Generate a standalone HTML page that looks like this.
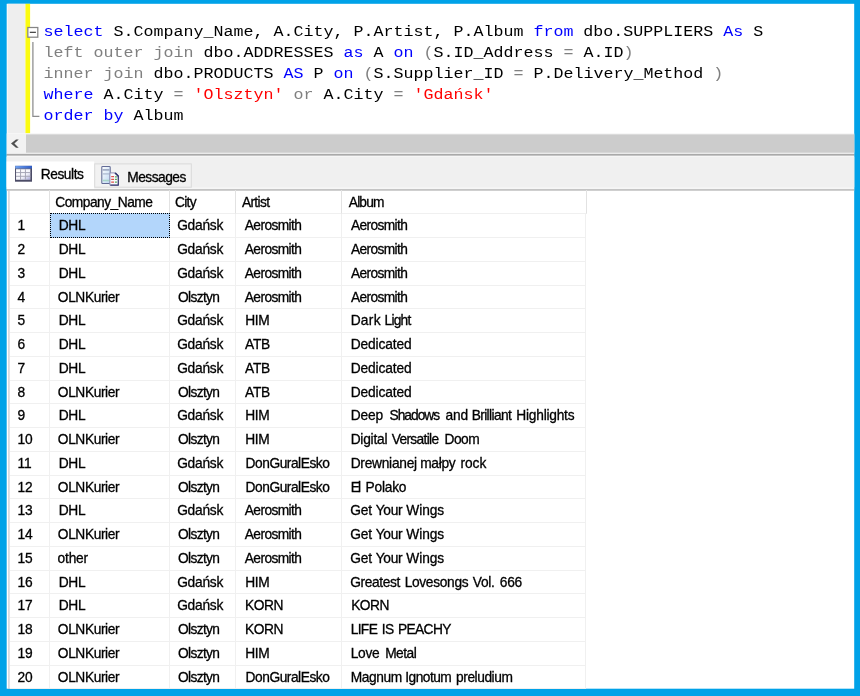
<!DOCTYPE html>
<html lang="pl">
<head>
<meta charset="utf-8">
<title>SQL query results</title>
<style>
html,body{margin:0;padding:0}
body{width:860px;height:696px;background:#00a2e8;position:relative;overflow:hidden;font-family:"Liberation Sans",sans-serif}
.abs{position:absolute}
.code{position:absolute;left:43.6px;top:0;font-family:"Liberation Mono",monospace;font-size:16.667px;line-height:21.1px;color:#000;white-space:pre}
.code div{position:absolute;left:0;height:21.1px;transform:scaleY(.86);transform-origin:0 15px}
.k{color:#0000ff}.g{color:#808080}.s{color:#ff0000}
.tabtxt{position:absolute;font-size:13.75px;line-height:16px;color:#000;white-space:nowrap}
.tabtxt i{font-style:normal}
/* grid */
.grid{position:absolute;left:0;top:0;width:860px;height:689px;overflow:hidden;font-size:13.75px;color:#000}
.hdr{--t:0px;position:absolute;left:0;top:190px;width:588px;height:24.25px}
.row{position:absolute;left:0;width:586px;height:23.75px}
.c{position:absolute;top:0;height:100%;box-sizing:border-box;border-right:1px solid #f0f0f0;border-bottom:1px solid #f0f0f0;line-height:24px;white-space:nowrap;overflow:hidden}
.c i{position:absolute;top:var(--t);font-style:normal}
.hdr i{top:1px}
.hdr .c{border-right-color:#e2e2e2;border-bottom-color:#f0f0f0}
.hdr .e{width:245.5px}
.n{left:10px;width:39.5px}
.n i{left:7.6px;letter-spacing:-.15px}
.a{left:49.5px;width:120px}
.b{left:169.5px;width:66px}
.d{left:235.5px;width:106px}
.e{left:341.5px;width:244.5px}
.sel{background:#b3d6fb;outline:1px dotted #000;outline-offset:-1px;top:-1px;height:24.75px;border:0}
.sel i{top:calc(var(--t) + 1px)}
.grid,.tabtxt{filter:blur(.35px);-webkit-text-stroke:.3px #000}
.code{filter:blur(.35px)}
</style>
</head>
<body>
<svg class="abs" style="left:0;top:0" width="860" height="696" viewBox="0 0 860 696">
<rect x="6.7" y="3.8" width="847.5" height="684.9" fill="#fff"/>
<rect x="7.6" y="3.8" width="17.8" height="129.4" fill="#eeeeee"/>
<rect x="25.45" y="3.8" width="4.65" height="129.5" fill="#fbfb10"/>
<rect x="27.85" y="27.5" width="9.95" height="9.7" fill="#fff" stroke="#858585" stroke-width="1.25"/>
<path d="M29.8 32.35H35.9" stroke="#4a4a4a" stroke-width="1.3"/>
<path d="M32.9 41.9V116.3H39.4" stroke="#8c8c8c" stroke-width="1.25" fill="none"/>
<rect x="6.7" y="133.4" width="847.5" height="20.6" fill="#f2f2f2"/>
<rect x="26" y="134.4" width="828.2" height="18.3" fill="#cccccc"/>
<path d="M11 143.6L16 139.4H18.7L14.4 143.6L18.7 147.8H16Z" fill="#505050"/>
<rect x="6.7" y="153.9" width="847.5" height="1.9" fill="#a9a9a9"/>
<rect x="6.7" y="155.8" width="847.5" height="33.2" fill="#f6f6f6"/>
<rect x="6.7" y="157" width="847.5" height="30.2" fill="#f0f0f0"/>
<rect x="6.7" y="161.5" width="87.5" height="27.5" fill="#fff"/>
<rect x="94.7" y="163.9" width="96.6" height="23.3" fill="#f2f2f2" stroke="#dadada" stroke-width="1"/>
<rect x="6.7" y="189" width="847.5" height="1.8" fill="#c4c4c4"/>
<rect x="8.35" y="190.8" width="1.15" height="498" fill="#c6c6cc"/>
</svg>
<div class="code">
<div style="top:20.5px"><span class="k">select</span> S.Company_Name, A.City, P.Artist, P.Album <span class="k">from</span> dbo.SUPPLIERS <span class="k">As</span> S</div>
<div style="top:41.55px"><span class="g">left outer join</span> dbo.ADDRESSES <span class="k">as</span> A <span class="k">on</span> <span class="g">(</span>S.ID_Address <span class="g">=</span> A.ID<span class="g">)</span></div>
<div style="top:62.6px"><span class="g">inner join</span> dbo.PRODUCTS <span class="k">AS</span> P <span class="k">on</span> <span class="g">(</span>S.Supplier_ID <span class="g">=</span> P.Delivery_Method <span class="g">)</span></div>
<div style="top:83.65px"><span class="k">where</span> A.City <span class="g">=</span> <span class="s">'Olsztyn'</span> <span class="g">or</span> A.City <span class="g">=</span> <span class="s">'Gdańsk'</span></div>
<div style="top:104.7px"><span class="k">order by</span> Album</div>
</div>
<!-- Results icon -->
<svg class="abs" style="left:14px;top:164px" width="20" height="20" viewBox="0 0 20 20">
<defs>
<linearGradient id="tb" x1="0" y1="0" x2="1" y2="0"><stop offset="0" stop-color="#6fa0ee"/><stop offset="1" stop-color="#2f5cc4"/></linearGradient>
<linearGradient id="cl" x1="0" y1="0" x2="1" y2="1"><stop offset="0" stop-color="#ffffff"/><stop offset=".6" stop-color="#f4f4fb"/><stop offset="1" stop-color="#a9a9d8"/></linearGradient>
</defs>
<rect x="1" y="1.9" width="17" height="15.8" fill="#4b4b66"/>
<rect x="1.9" y="4.6" width="14.6" height="11.2" fill="#a3a3b4"/>
<rect x="1.2" y="1.8" width="16.8" height="2.7" fill="url(#tb)"/>
<g fill="url(#cl)">
<rect x="2.1" y="5.4" width="14" height="10.2"/>
</g>
<g stroke="#a3a3b4" stroke-width="0.95" fill="none">
<path d="M6.55 5.2V15.8M11.45 5.2V15.8M2 8.55H16.3M2 12.3H16.3"/>
</g>
</svg>
<!-- Messages icon -->
<svg class="abs" style="left:100px;top:164px" width="21" height="23" viewBox="0 0 21 23">
<defs>
<linearGradient id="dg" x1="0" y1="0" x2="1" y2="1"><stop offset="0" stop-color="#ffffff"/><stop offset="1" stop-color="#bcd6f2"/></linearGradient>
</defs>
<rect x="1.8" y="2.5" width="8.4" height="17" rx="0.8" fill="url(#dg)" stroke="#626b96" stroke-width="1.05"/>
<path d="M2.6 5.9H9.5" stroke="#8f9bb8" stroke-width="1.4"/>
<path d="M2.6 9.9H9.5" stroke="#a9b6cf" stroke-width="1.2"/>
<path d="M2.6 16.5H9.5" stroke="#a8d6c8" stroke-width="1.6"/>
<path d="M9.9 8.9H15.6L18.3 11.6V21.2H9.9Z" fill="#fbfbfd" stroke="#8f90b4" stroke-width="1" stroke-linejoin="round"/>
<path d="M15.4 8.9L18.3 11.8V21.2H10.4" fill="none" stroke="#3b3d76" stroke-width="1.2" stroke-linejoin="round"/>
<path d="M15.2 8.6L18.6 12V13.4L14.5 9.4Z" fill="#34366e"/>
<path d="M11.2 12.6H14M11.2 15.4H14M11.2 18.2H14" stroke="#e0524e" stroke-width="1.3"/>
<path d="M14.9 12.9H16.9M14.9 15.4H16.9M14.9 18.2H16.9" stroke="#58a85a" stroke-width="1.3"/>
</svg>
<div class="tabtxt" style="left:40.7px;top:167px"><i style="letter-spacing:-.43px">Results</i></div>
<div class="tabtxt" style="left:127.2px;top:169.5px"><i style="letter-spacing:-.5px">Messages</i></div>
<div class="grid">
<div class="hdr"><span class="c n"></span><span class="c a"><i style="left:5.8px;letter-spacing:-0.51px">Company_Name</i></span><span class="c b"><i style="left:5.55px;letter-spacing:-0.72px">City</i></span><span class="c d"><i style="left:6.4px;letter-spacing:-0.65px">Artist</i></span><span class="c e"><i style="left:7.3px;letter-spacing:-0.83px">Album</i></span></div>

<div class="row" style="top:214.25px;--t:-0.25px"><span class="c n"><i>1</i></span><span class="c a sel"><i style="left:9.2px;letter-spacing:-0.3px">DHL</i></span><span class="c b"><i style="left:7.65px;letter-spacing:-0.24px">Gdańsk</i></span><span class="c d"><i style="left:9.3px;letter-spacing:-0.6px">Aerosmith</i></span><span class="c e"><i style="left:9.4px;letter-spacing:-0.61px">Aerosmith</i></span></div>
<div class="row" style="top:238px;--t:0px"><span class="c n"><i>2</i></span><span class="c a"><i style="left:9.2px;letter-spacing:-0.3px">DHL</i></span><span class="c b"><i style="left:7.65px;letter-spacing:-0.24px">Gdańsk</i></span><span class="c d"><i style="left:9.3px;letter-spacing:-0.6px">Aerosmith</i></span><span class="c e"><i style="left:9.4px;letter-spacing:-0.61px">Aerosmith</i></span></div>
<div class="row" style="top:261.75px;--t:0.25px"><span class="c n"><i>3</i></span><span class="c a"><i style="left:9.2px;letter-spacing:-0.3px">DHL</i></span><span class="c b"><i style="left:7.65px;letter-spacing:-0.24px">Gdańsk</i></span><span class="c d"><i style="left:9.3px;letter-spacing:-0.6px">Aerosmith</i></span><span class="c e"><i style="left:9.4px;letter-spacing:-0.61px">Aerosmith</i></span></div>
<div class="row" style="top:285.5px;--t:0.5px"><span class="c n"><i>4</i></span><span class="c a"><i style="left:8.35px;letter-spacing:-0.41px">OLNKurier</i></span><span class="c b"><i style="left:8.45px;letter-spacing:-0.64px">Olsztyn</i></span><span class="c d"><i style="left:9.3px;letter-spacing:-0.6px">Aerosmith</i></span><span class="c e"><i style="left:9.4px;letter-spacing:-0.61px">Aerosmith</i></span></div>
<div class="row" style="top:309.25px;--t:-0.25px"><span class="c n"><i>5</i></span><span class="c a"><i style="left:9.2px;letter-spacing:-0.3px">DHL</i></span><span class="c b"><i style="left:7.65px;letter-spacing:-0.24px">Gdańsk</i></span><span class="c d"><i style="left:9.65px;letter-spacing:-0.38px">HIM</i></span><span class="c e"><i style="left:9.15px;letter-spacing:0.28px">Dark</i> <i style="left:43.05px;letter-spacing:-0.78px">Light</i></span></div>
<div class="row" style="top:333px;--t:0px"><span class="c n"><i>6</i></span><span class="c a"><i style="left:9.2px;letter-spacing:-0.3px">DHL</i></span><span class="c b"><i style="left:7.65px;letter-spacing:-0.24px">Gdańsk</i></span><span class="c d"><i style="left:9.5px;letter-spacing:-0.25px">ATB</i></span><span class="c e"><i style="left:9.15px;letter-spacing:-0.12px">Dedicated</i></span></div>
<div class="row" style="top:356.75px;--t:0.25px"><span class="c n"><i>7</i></span><span class="c a"><i style="left:9.2px;letter-spacing:-0.3px">DHL</i></span><span class="c b"><i style="left:7.65px;letter-spacing:-0.24px">Gdańsk</i></span><span class="c d"><i style="left:9.5px;letter-spacing:-0.25px">ATB</i></span><span class="c e"><i style="left:9.15px;letter-spacing:-0.12px">Dedicated</i></span></div>
<div class="row" style="top:380.5px;--t:0.5px"><span class="c n"><i>8</i></span><span class="c a"><i style="left:8.35px;letter-spacing:-0.41px">OLNKurier</i></span><span class="c b"><i style="left:8.45px;letter-spacing:-0.64px">Olsztyn</i></span><span class="c d"><i style="left:9.5px;letter-spacing:-0.25px">ATB</i></span><span class="c e"><i style="left:9.15px;letter-spacing:-0.12px">Dedicated</i></span></div>
<div class="row" style="top:404.25px;--t:-0.25px"><span class="c n"><i>9</i></span><span class="c a"><i style="left:9.2px;letter-spacing:-0.3px">DHL</i></span><span class="c b"><i style="left:7.65px;letter-spacing:-0.24px">Gdańsk</i></span><span class="c d"><i style="left:9.65px;letter-spacing:-0.38px">HIM</i></span><span class="c e"><i style="left:9.15px;letter-spacing:-0.13px">Deep</i> <i style="left:47.95px;letter-spacing:-0.98px">Shadows</i> <i style="left:104px;letter-spacing:-0.15px">and</i> <i style="left:130.15px;letter-spacing:-0.62px">Brilliant</i> <i style="left:174.85px;letter-spacing:-0.24px">Highlights</i></span></div>
<div class="row" style="top:428px;--t:0px"><span class="c n"><i>10</i></span><span class="c a"><i style="left:8.35px;letter-spacing:-0.41px">OLNKurier</i></span><span class="c b"><i style="left:8.45px;letter-spacing:-0.64px">Olsztyn</i></span><span class="c d"><i style="left:9.65px;letter-spacing:-0.38px">HIM</i></span><span class="c e"><i style="left:9.15px;letter-spacing:-0.22px">Digital</i> <i style="left:50.15px;letter-spacing:-0.66px">Versatile</i> <i style="left:102.95px;letter-spacing:-0.47px">Doom</i></span></div>
<div class="row" style="top:451.75px;--t:0.25px"><span class="c n"><i>11</i></span><span class="c a"><i style="left:9.2px;letter-spacing:-0.3px">DHL</i></span><span class="c b"><i style="left:7.65px;letter-spacing:-0.24px">Gdańsk</i></span><span class="c d"><i style="left:10.05px;letter-spacing:-0.46px">DonGuralEsko</i></span><span class="c e"><i style="left:9.15px;letter-spacing:-0.25px">Drewnianej</i> <i style="left:78.7px;letter-spacing:-0.3px">małpy</i> <i style="left:118.9px;letter-spacing:-0.03px">rock</i></span></div>
<div class="row" style="top:475.5px;--t:0.5px"><span class="c n"><i>12</i></span><span class="c a"><i style="left:8.35px;letter-spacing:-0.41px">OLNKurier</i></span><span class="c b"><i style="left:8.45px;letter-spacing:-0.64px">Olsztyn</i></span><span class="c d"><i style="left:10.05px;letter-spacing:-0.46px">DonGuralEsko</i></span><span class="c e"><i style="left:9.15px;letter-spacing:-1.8px">El</i> <i style="left:24.05px;letter-spacing:-0.23px">Polako</i></span></div>
<div class="row" style="top:499.25px;--t:-0.25px"><span class="c n"><i>13</i></span><span class="c a"><i style="left:9.2px;letter-spacing:-0.3px">DHL</i></span><span class="c b"><i style="left:7.65px;letter-spacing:-0.24px">Gdańsk</i></span><span class="c d"><i style="left:9.3px;letter-spacing:-0.6px">Aerosmith</i></span><span class="c e"><i style="left:8.65px;letter-spacing:-0.17px">Get</i> <i style="left:34.2px;letter-spacing:-0.27px">Your</i> <i style="left:64.85px;letter-spacing:-0.12px">Wings</i></span></div>
<div class="row" style="top:523px;--t:0px"><span class="c n"><i>14</i></span><span class="c a"><i style="left:8.35px;letter-spacing:-0.41px">OLNKurier</i></span><span class="c b"><i style="left:8.45px;letter-spacing:-0.64px">Olsztyn</i></span><span class="c d"><i style="left:9.3px;letter-spacing:-0.6px">Aerosmith</i></span><span class="c e"><i style="left:8.65px;letter-spacing:-0.17px">Get</i> <i style="left:34.2px;letter-spacing:-0.27px">Your</i> <i style="left:64.85px;letter-spacing:-0.12px">Wings</i></span></div>
<div class="row" style="top:546.75px;--t:0.25px"><span class="c n"><i>15</i></span><span class="c a"><i style="left:8.1px;letter-spacing:-0.2px">other</i></span><span class="c b"><i style="left:8.45px;letter-spacing:-0.64px">Olsztyn</i></span><span class="c d"><i style="left:9.3px;letter-spacing:-0.6px">Aerosmith</i></span><span class="c e"><i style="left:8.65px;letter-spacing:-0.17px">Get</i> <i style="left:34.2px;letter-spacing:-0.27px">Your</i> <i style="left:64.85px;letter-spacing:-0.12px">Wings</i></span></div>
<div class="row" style="top:570.5px;--t:0.5px"><span class="c n"><i>16</i></span><span class="c a"><i style="left:9.2px;letter-spacing:-0.3px">DHL</i></span><span class="c b"><i style="left:7.65px;letter-spacing:-0.24px">Gdańsk</i></span><span class="c d"><i style="left:9.65px;letter-spacing:-0.38px">HIM</i></span><span class="c e"><i style="left:8.65px;letter-spacing:-0.36px">Greatest</i> <i style="left:63.15px;letter-spacing:-0.32px">Lovesongs</i> <i style="left:131.25px;letter-spacing:-0.27px">Vol.</i> <i style="left:158.35px;letter-spacing:-0.35px">666</i></span></div>
<div class="row" style="top:594.25px;--t:-0.25px"><span class="c n"><i>17</i></span><span class="c a"><i style="left:9.2px;letter-spacing:-0.3px">DHL</i></span><span class="c b"><i style="left:7.65px;letter-spacing:-0.24px">Gdańsk</i></span><span class="c d"><i style="left:9.5px;letter-spacing:-0.45px">KORN</i></span><span class="c e"><i style="left:9.7px;letter-spacing:-0.5px">KORN</i></span></div>
<div class="row" style="top:618px;--t:0px"><span class="c n"><i>18</i></span><span class="c a"><i style="left:8.35px;letter-spacing:-0.41px">OLNKurier</i></span><span class="c b"><i style="left:8.45px;letter-spacing:-0.64px">Olsztyn</i></span><span class="c d"><i style="left:9.5px;letter-spacing:-0.45px">KORN</i></span><span class="c e"><i style="left:9.15px;letter-spacing:-0.62px">LIFE</i> <i style="left:40.15px;letter-spacing:-0.5px">IS</i> <i style="left:56.45px;letter-spacing:-0.62px">PEACHY</i></span></div>
<div class="row" style="top:641.75px;--t:0.25px"><span class="c n"><i>19</i></span><span class="c a"><i style="left:8.35px;letter-spacing:-0.41px">OLNKurier</i></span><span class="c b"><i style="left:8.45px;letter-spacing:-0.64px">Olsztyn</i></span><span class="c d"><i style="left:9.65px;letter-spacing:-0.38px">HIM</i></span><span class="c e"><i style="left:9.15px;letter-spacing:-0.27px">Love</i> <i style="left:43.65px;letter-spacing:-0.52px">Metal</i></span></div>
<div class="row" style="top:665.5px;--t:0.5px"><span class="c n"><i>20</i></span><span class="c a"><i style="left:8.35px;letter-spacing:-0.41px">OLNKurier</i></span><span class="c b"><i style="left:8.45px;letter-spacing:-0.64px">Olsztyn</i></span><span class="c d"><i style="left:10.05px;letter-spacing:-0.46px">DonGuralEsko</i></span><span class="c e"><i style="left:9.15px;letter-spacing:-0.39px">Magnum</i> <i style="left:63.75px;letter-spacing:-0.52px">Ignotum</i> <i style="left:114.6px;letter-spacing:-0.45px">preludium</i></span></div>
</div>
</body>
</html>
